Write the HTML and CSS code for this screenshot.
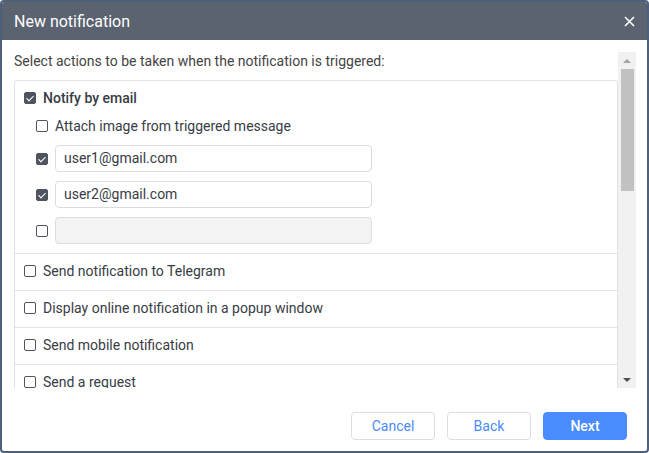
FILE: index.html
```html
<!DOCTYPE html>
<html lang="en">
<head>
    <meta charset="UTF-8">
    <title>New notification</title>
    <link rel="stylesheet" href="styles.css">
</head>
<body>
    <div class="dialog">
        <div class="dialog-header">
            <span class="dialog-title">New notification</span>
            <svg class="close-icon" width="11" height="11" viewBox="0 0 11 11">
                <path d="M1 1L10 10M10 1L1 10" stroke="#fff" stroke-width="1.6" fill="none"/>
            </svg>
        </div>

        <div class="dialog-main">
            <div class="dialog-content">
                <div class="intro">Select actions to be taken when the notification is triggered:</div>

                <div class="action-list">
                    <div class="action-group">
                        <label class="action-head">
                            <span class="check checked"></span>
                            <span class="action-label strong">Notify by email</span>
                        </label>
                        <label class="sub-row attach">
                            <span class="check"></span>
                            <span class="action-label">Attach image from triggered message</span>
                        </label>
                        <div class="sub-row">
                            <span class="check checked"></span>
                            <div class="text-input">user1@gmail.com</div>
                        </div>
                        <div class="sub-row">
                            <span class="check checked"></span>
                            <div class="text-input">user2@gmail.com</div>
                        </div>
                        <div class="sub-row">
                            <span class="check"></span>
                            <div class="text-input empty"></div>
                        </div>
                    </div>
                    <label class="action-row">
                        <span class="check"></span>
                        <span class="action-label">Send notification to Telegram</span>
                    </label>
                    <label class="action-row">
                        <span class="check"></span>
                        <span class="action-label">Display online notification in a popup window</span>
                    </label>
                    <label class="action-row">
                        <span class="check"></span>
                        <span class="action-label">Send mobile notification</span>
                    </label>
                    <label class="action-row">
                        <span class="check"></span>
                        <span class="action-label">Send a request</span>
                    </label>
                </div>
            </div>

            <div class="scrollbar">
                <div class="scroll-btn"><span class="arrow-up"></span></div>
                <div class="scroll-track">
                    <div class="scroll-thumb"></div>
                </div>
                <div class="scroll-btn"><span class="arrow-down"></span></div>
            </div>
        </div>

        <div class="dialog-footer">
            <button class="btn">Cancel</button>
            <button class="btn">Back</button>
            <button class="btn btn-primary">Next</button>
        </div>
    </div>
</body>
</html>
```

FILE: styles.css
```css
* {
    margin: 0;
    padding: 0;
    box-sizing: border-box;
}

body {
    font-family: Roboto, "Liberation Sans", sans-serif;
    background: #fff;
    color: #3b3f48;
}

.dialog {
    width: 649px;
    height: 453px;
    border: 2px solid #4e5f7c;
    border-radius: 4px;
    display: flex;
    flex-direction: column;
    overflow: hidden;
    background: #fff;
}

.dialog-header {
    height: 38px;
    flex-shrink: 0;
    background: #5b6270;
    display: flex;
    align-items: center;
    justify-content: space-between;
    padding: 0 12px 0 12px;
}

.dialog-title {
    color: #fff;
    font-size: 16px;
}

.close-icon {
    display: block;
}

.dialog-main {
    display: flex;
    height: 336px;
    margin-top: 12px;
    padding-right: 11px;
}

.dialog-content {
    flex: 1;
    overflow: hidden;
    padding-left: 12px;
}

.intro {
    font-size: 14px;
    line-height: 18px;
    color: #444;
}

.action-list {
    margin-top: 10px;
    border: 1px solid #e2e2e2;
    border-bottom: none;
    border-radius: 4px 4px 0 0;
}

.action-group {
    display: flex;
    flex-direction: column;
    gap: 9px;
    padding: 8px 10px 9px 9px;
}

.action-head,
.action-row,
.sub-row {
    display: flex;
    align-items: center;
}

.action-row {
    height: 37px;
    padding: 0 10px 2px 9px;
    border-top: 1px solid #e2e2e2;
}

.sub-row {
    padding-left: 12px;
}

.sub-row.attach {
    height: 20px;
}

.action-label {
    font-size: 14px;
    line-height: 18px;
    color: #383c45;
    margin-left: 7px;
}

.action-label.strong {
    font-weight: 500;
}

.check {
    width: 12px;
    height: 12px;
    flex-shrink: 0;
    border: 1px solid #50545e;
    border-radius: 2px;
    background: #fff;
    position: relative;
}

.check.checked {
    background: #50545e;
}

.check.checked::after {
    content: "";
    position: absolute;
    left: 3px;
    top: 1px;
    width: 3px;
    height: 6px;
    border: solid #fff;
    border-width: 0 1.5px 1.5px 0;
    transform: rotate(45deg);
}

.text-input {
    width: 317px;
    height: 27px;
    margin-left: 7px;
    border: 1px solid #dcdcdc;
    border-radius: 4px;
    font-size: 14px;
    line-height: 25px;
    padding-left: 8px;
    color: #383c45;
}

.text-input.empty {
    background: #f3f3f3;
}

.scrollbar {
    width: 18px;
    background: #f1f1f1;
    display: flex;
    flex-direction: column;
}

.scroll-btn {
    height: 17px;
    display: flex;
    align-items: center;
    justify-content: center;
}

.arrow-up {
    width: 0;
    height: 0;
    border-left: 4px solid transparent;
    border-right: 4px solid transparent;
    border-bottom: 4px solid #a3a3a3;
}

.arrow-down {
    width: 0;
    height: 0;
    border-left: 4px solid transparent;
    border-right: 4px solid transparent;
    border-top: 4px solid #505050;
}

.scroll-track {
    flex: 1;
    padding: 0 2px 0 3px;
}

.scroll-thumb {
    height: 122px;
    background: #c1c1c1;
}

.dialog-footer {
    display: flex;
    justify-content: flex-end;
    gap: 12px;
    padding: 24px 20px 0 0;
}

.btn {
    width: 84px;
    height: 28px;
    border: 1px solid #dedede;
    border-radius: 4px;
    background: #fff;
    color: #4a8cf7;
    font-family: Roboto, "Liberation Sans", sans-serif;
    font-size: 14px;
    cursor: pointer;
}

.btn-primary {
    background: #4a8cff;
    border-color: #4a8cff;
    color: #fff;
    font-weight: 500;
}
```
